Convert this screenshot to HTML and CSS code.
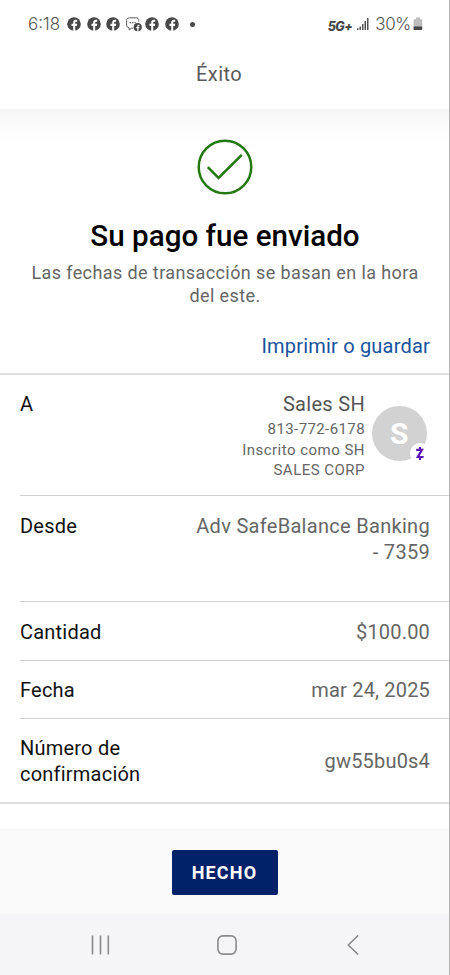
FILE: index.html
```html
<!DOCTYPE html>
<html lang="es">
<head>
<meta charset="utf-8">
<title>Éxito</title>
<link rel="stylesheet" href="styles.css">
</head>
<body>
<svg class="defs" width="0" height="0" aria-hidden="true">
  <symbol id="fb" viewBox="0 0 14 14">
    <circle cx="7" cy="7" r="6.8" fill="#484848"/>
    <path d="M6.2 14V8.9H4.5V6.8h1.7V5.6c0-1.9 1-2.8 2.7-2.8.6 0 1 .1 1.3.1v1.8H9.300c-.8 0-1.100.4-1.100 1.100v1h2l-.3 2.100H8.200V14z" fill="#fff"/>
  </symbol>
</svg>
<div class="phone">
  <div class="status">
    <span class="time">6:18</span>
    <div class="notices">
      <svg width="14" height="14"><use href="#fb"/></svg>
      <svg width="14" height="14"><use href="#fb"/></svg>
      <svg width="14" height="14"><use href="#fb"/></svg>
      <svg class="chat" width="16" height="15" viewBox="0 0 16 15">
        <path d="M7 11.200H5.500L3.200 13v-2.200C1.500 10.500.6 9.500.6 8V3.700C.6 1.800 1.700.8 3.600.8h6.300c1.900 0 2.900 1 2.900 2.900v.9" fill="none" stroke="#5a5a5a" stroke-width="1"/>
        <g fill="#5a5a5a"><circle cx="4.200" cy="5.800" r=".8"/><circle cx="6.700" cy="5.800" r=".8"/><circle cx="9.100" cy="5.500" r=".7"/></g>
        <circle cx="11.700" cy="10.200" r="4.100" fill="#484848"/>
        <path d="M11.300 14.500v-3.300h-1.100V9.900h1.100v-.7c0-1.200.7-1.700 2.200-1.500v1.200c-.7 0-1 .1-1 .6v.4h1l-.2 1.300h-.8v3.300z" fill="#fff"/>
      </svg>
      <svg width="14" height="14"><use href="#fb"/></svg>
      <svg width="14" height="14"><use href="#fb"/></svg>
    </div>
    <span class="dot"></span>
    <div class="system">
      <span class="network">5G+</span>
      <svg class="signal" width="12" height="13" viewBox="0 0 12 13" fill="#505050">
        <path d="M0 10.300h1.500V12H0zM2.500 8.500H4V12H2.500zM5 6h1.500v6H5zM7.500 3H9v9H7.500zM10 0h1.500v12H10z"/>
      </svg>
      <span class="percent">30%</span>
      <svg class="battery" width="10" height="14" viewBox="0 0 10 14">
        <path d="M3 .5h4v1.700h1.200c.6 0 1 .4 1 1V12c0 .6-.4 1-1 1H1.600c-.6 0-1-.4-1-1V3.200c0-.6.4-1 1-1H3z" fill="#bdbdbd"/>
        <path d="M.6 9.600h8.600V12c0 .6-.4 1-1 1H1.600c-.6 0-1-.4-1-1z" fill="#484848"/>
      </svg>
    </div>
  </div>
  <header class="title">Éxito</header>
  <main>
    <section class="hero">
      <svg class="check" width="56" height="56" viewBox="0 0 56 56" fill="none" stroke="#23780f" stroke-width="2.500">
        <circle cx="28" cy="28" r="26.300"/>
        <path d="M10.800 28.200 21.500 39 44.800 15.800"/>
      </svg>
      <h1>Su pago fue enviado</h1>
      <p class="note">Las fechas de transacción se basan en la hora del este.</p>
      <a class="print">Imprimir o guardar</a>
    </section>
    <dl class="details">
      <div class="row row-to">
        <dt>A</dt>
        <dd class="payee">
          <div class="payee-text">
            <span class="payee-name">Sales SH</span>
            <span class="phone-number">813-772-6178</span>
            <span class="enrolled">Inscrito como SH</span>
            <span class="corp">SALES CORP</span>
          </div>
          <div class="avatar">S
            <span class="zelle"><svg width="10" height="15" viewBox="0 0 10 15" fill="none" stroke="#5c17b8" stroke-width="2.200"><path d="M1.200 3.900H7L2.800 11h5.800"/><path d="M5 .9v3M5 11v3"/></svg></span>
          </div>
        </dd>
      </div>
      <div class="row row-from"><dt>Desde</dt><dd class="account">Adv SafeBalance Banking<br>- 7359</dd></div>
      <div class="row row-amount"><dt>Cantidad</dt><dd class="amount">$100.00</dd></div>
      <div class="row"><dt>Fecha</dt><dd class="date">mar 24, 2025</dd></div>
      <div class="row row-code"><dt>Número de<br>confirmación</dt><dd class="code">gw55bu0s4</dd></div>
    </dl>
  </main>
  <footer class="actions"><button class="done">HECHO</button></footer>
  <nav class="nav">
    <svg width="20" height="20" viewBox="0 0 20 20" fill="none" stroke="#8b8b8d" stroke-width="1.600"><path d="M1.500.5v19M9.500.5v19M17.300.5v19"/></svg>
    <svg class="home" width="20" height="20" viewBox="0 0 20 20" fill="none" stroke="#8b8b8d" stroke-width="1.600"><rect x=".9" y=".9" width="18.200" height="18.200" rx="5"/></svg>
    <svg width="12" height="20" viewBox="0 0 12 20" fill="none" stroke="#8b8b8d" stroke-width="1.600"><path d="M11.200.5 1.300 10l9.900 9.500"/></svg>
  </nav>
</div>
</body>
</html>
```
FILE: styles.css
```css
* { box-sizing: border-box; }
body { margin: 0; background: #fff; font-family: Roboto, sans-serif; font-size: 20px; line-height: 26px; color: #111; }
svg { display: block; flex: none; }
.defs { position: absolute; }
.phone { width: 450px; height: 975px; display: flex; flex-direction: column; border-right: 1px solid #b4b4b4; overflow: hidden; }

.status { height: 48px; display: flex; align-items: center; padding: 0 26px 0 28px; color: #555; flex: none; }
.time, .percent { font-family: Inter, sans-serif; font-size: 17px; font-weight: 300; line-height: 20px; }
.time { width: 32px; letter-spacing: 0; }
.notices { display: flex; align-items: center; gap: 5.600px; margin-left: 7px; }
.chat { margin-right: -2px; }
.dot { width: 5px; height: 5px; border-radius: 50%; background: #484848; margin-left: 11px; }
.system { margin-left: auto; display: flex; align-items: center; }
.network { font-family: Inter, sans-serif; font-size: 12.500px; font-weight: 800; font-style: italic; line-height: 16px; letter-spacing: -0.6px; margin: 5px 5px 0 0; color: #444; }
.percent { margin-left: 6px; letter-spacing: -0.3px; }
.battery { margin-left: 2px; }

.title { height: 61px; flex: none; padding-top: 13px; text-align: center; color: #5a5a5a; letter-spacing: 0.4px; padding-right: 11px; }

main { flex: 1; display: flex; flex-direction: column; background: linear-gradient(#f5f5f5, #fbfbfb 14px, #fff 42px); }
.hero { height: 264px; display: flex; flex-direction: column; align-items: center; padding: 30px 19px 0 20px; }
h1 { margin: 22px 0 0; font-size: 29.600px; font-weight: 500; line-height: 38px; color: #000; }
.note { margin: 6px 0 0; width: 396px; text-align: center; font-size: 18px; line-height: 23px; letter-spacing: 0.4px; color: #666; }
.print { align-self: flex-end; margin-top: 26px; color: #17529c; letter-spacing: 0.2px; }

.details { margin: 0; border-top: 2px solid #dedede; border-bottom: 2px solid #dedede; height: 431px; flex: none; }
.row { display: flex; justify-content: space-between; align-items: center; margin-left: 20px; padding: 1px 19px 0 0; height: 58.500px; border-bottom: 1px solid #d0d0d0; }
dt { letter-spacing: 0.22px; }
dd { margin: 0; text-align: right; color: #666; letter-spacing: 0.3px; }
.row-to { height: 121px; align-items: flex-start; padding-top: 16px; }
.row-from { height: 106px; align-items: flex-start; padding-top: 17px; }
.row-amount { padding-top: 2px; }
.row-code { height: 84px; border-bottom: 0; padding-top: 0; }
.date, .amount, .code { letter-spacing: 0.18px; }
.payee { display: flex; gap: 7px; margin-right: 3px; }
.payee-text { display: flex; flex-direction: column; align-items: flex-end; }
.payee-name { color: #555; }
.phone-number, .enrolled, .corp { font-size: 15px; line-height: 20px; letter-spacing: 0.48px; }
.phone-number { margin-top: 2px; letter-spacing: 0.4px; }
.enrolled { margin-top: 1px; }
.avatar { position: relative; width: 55px; height: 55px; margin-top: 15px; border-radius: 50%; background: #d2d2d2; color: #fff; font-weight: 700; font-size: 30px; line-height: 56px; text-align: center; }
.zelle { position: absolute; right: -3px; bottom: -2px; width: 20px; height: 20px; border-radius: 50%; background: #fff; display: grid; place-items: center; }

.actions { height: 85px; flex: none; background: #fafafa; border-top: 1px solid #f4f4f4; display: flex; justify-content: center; padding-top: 20px; }
.done { width: 106px; height: 45px; border: 0; padding: 0; border-radius: 2px; background: #012169; color: #fff; font: 700 18px/45px Roboto, sans-serif; letter-spacing: 1.200px; }
.nav { height: 61px; flex: none; background: #f5f5f7; display: flex; align-items: center; justify-content: space-between; padding: 0 90px 0 91px; }
.home { margin-right: 4px; }
```
